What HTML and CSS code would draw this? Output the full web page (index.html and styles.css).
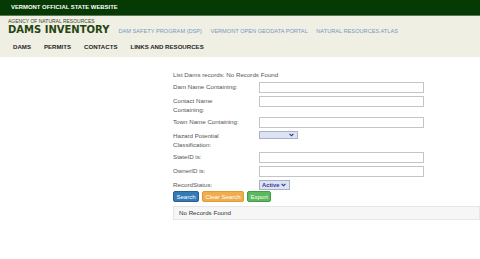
FILE: index.html
```html
<!DOCTYPE html>
<html lang="en">
<head>
  <meta charset="UTF-8" />
  <title>Dams Inventory</title>
  <link rel="stylesheet" href="styles.css">
</head>
<body>
  <div class="state-bar">VERMONT OFFICIAL STATE WEBSITE</div>

  <header class="masthead">
    <div class="brand">
      <div class="agency">AGENCY OF NATURAL RESOURCES</div>
      <div class="title-row">
        <span class="site-title">DAMS INVENTORY</span>
        <nav class="site-links">
          <a href="#">DAM SAFETY PROGRAM (DSP)</a>
          <a href="#">VERMONT OPEN GEODATA PORTAL</a>
          <a href="#">NATURAL RESOURCES ATLAS</a>
        </nav>
      </div>
    </div>
    <nav class="main-nav">
      <a href="#">DAMS</a>
      <a href="#">PERMITS</a>
      <a href="#">CONTACTS</a>
      <a href="#">LINKS AND RESOURCES</a>
    </nav>
  </header>

  <main class="page">
    <div class="spacer"></div>
    <div class="search-panel">
      <div class="caption">List Dams records: No Records Found</div>

      <form class="search-form">
        <label>Dam Name Containing:</label>
        <input type="text" class="text-box">

        <label>Contact Name Containing:</label>
        <input type="text" class="text-box">

        <label>Town Name Containing:</label>
        <input type="text" class="text-box">

        <label>Hazard Potential Classification:</label>
        <div class="fake-select hazard">
          <span></span>
          <svg width="5" height="4" viewBox="0 0 5 4"><polyline points="0.6,0.8 2.5,2.8 4.4,0.8" fill="none" stroke="#2b2f86" stroke-width="1.1"/></svg>
        </div>

        <label>StateID is:</label>
        <input type="text" class="text-box">

        <label>OwnerID is:</label>
        <input type="text" class="text-box">

        <label>RecordStatus:</label>
        <div class="fake-select status">
          <span>Active</span>
          <svg width="5" height="4" viewBox="0 0 5 4"><polyline points="0.6,0.8 2.5,2.8 4.4,0.8" fill="none" stroke="#2b2f86" stroke-width="1.1"/></svg>
        </div>
      </form>

      <div class="actions">
        <button class="btn btn-blue">Search</button>
        <button class="btn btn-orange">Clear Search</button>
        <button class="btn btn-green">Export</button>
      </div>

      <div class="well">No Records Found</div>
    </div>
  </main>
</body>
</html>
```

FILE: styles.css
```css
:root {
  --bar-green: #063a04;
  --band: #efefe4;
  --title: #24450f;
  --link: #7899c2;
  --label: #555555;
  --box-border: #c4c4c4;
}

html {
  overflow-x: hidden;
}

body {
  margin: 0;
  font-family: "Liberation Sans", Arial, sans-serif;
  color: #333;
  background: #fff;
}

*, *::before, *::after {
  box-sizing: border-box;
}

.state-bar {
  height: 16px;
  line-height: 15px;
  padding-left: 11px;
  background-color: var(--bar-green);
  border-bottom: 1px solid #5f7355;
  color: #fff;
  font-weight: bold;
  font-size: 5.9px;
}

.masthead {
  background-color: var(--band);
  height: 41px;
}

.brand {
  padding: 2px 8px 0;
}

.agency {
  font-size: 5px;
  line-height: 6px;
  color: #3a4a2a;
}

.title-row {
  display: flex;
  align-items: baseline;
  gap: 9px;
}

.site-title {
  font-family: "DejaVu Sans", sans-serif;
  font-weight: bold;
  font-size: 10px;
  line-height: 11px;
  color: var(--title);
}

.site-links {
  display: flex;
  gap: 8.5px;
}

.site-links a {
  color: var(--link);
  font-size: 5.65px;
  text-decoration: none;
}

.main-nav {
  display: flex;
  align-items: center;
  height: 22px;
  padding-left: 6.5px;
}

.main-nav a {
  padding: 0 6.5px;
  color: #1e1e1e;
  font-weight: bold;
  font-size: 6.1px;
  text-decoration: none;
}

.page {
  display: grid;
  grid-template-columns: 173px 1fr;
}

.search-panel {
  padding-top: 12.5px;
  color: var(--label);
  font-size: 6.2px;
}

.caption {
  line-height: 9px;
  margin-bottom: 3.5px;
}

.search-form {
  display: grid;
  grid-template-columns: 70px 165px;
  column-gap: 16px;
  row-gap: 3px;
  align-items: start;
}

.search-form label {
  line-height: 9px;
}

.text-box {
  width: 165px;
  height: 11px;
  margin: 0;
  padding: 0 2px;
  border: 1px solid var(--box-border);
  background: #fff;
}

.fake-select {
  display: flex;
  align-items: center;
  justify-content: space-between;
  padding: 0 3px 0 2px;
  background-color: #dce4f4;
  border: 1px solid #a9b1c6;
}

.fake-select.hazard {
  width: 39px;
  height: 8px;
}

.fake-select.status {
  width: 31px;
  height: 10px;
  color: #3a3a9c;
  font-weight: bold;
  font-size: 5.8px;
}

.actions {
  display: flex;
  gap: 3px;
  margin-top: 1px;
}

.btn {
  height: 11px;
  padding: 0 2.5px;
  border-radius: 2px;
  font-family: "Liberation Sans", Arial, sans-serif;
  font-size: 6px;
  color: #fff;
  cursor: pointer;
}

.btn-blue {
  background-color: #337ab7;
  border: 1px solid #2a5f90;
}

.btn-orange {
  background-color: #f0ad4e;
  border: 1px solid #e09a3a;
}

.btn-green {
  background-color: #5cb85c;
  border: 1px solid #449d44;
}

.well {
  margin-top: 4px;
  height: 14px;
  line-height: 12px;
  padding-left: 5px;
  background-color: #f6f6f6;
  border: 1px solid #e6e6e6;
  color: #333;
  font-size: 6.2px;
}
```
